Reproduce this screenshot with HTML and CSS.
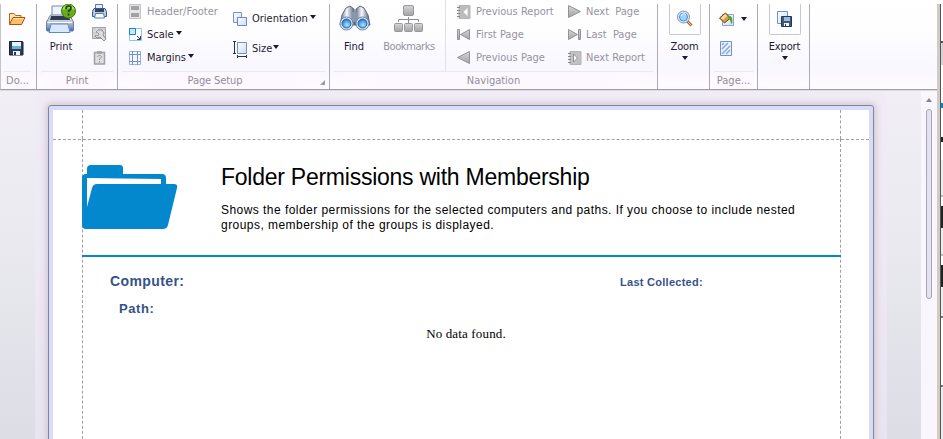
FILE: index.html
```html
<!DOCTYPE html>
<html lang="en">
<head>
<meta charset="utf-8">
<title>Folder Permissions with Membership</title>
<link rel="stylesheet" href="styles.css">
</head>
<body>
<svg class="defs" width="0" height="0" aria-hidden="true">
  <defs>
    <linearGradient id="metal" x1="0" y1="0" x2="0" y2="1"><stop offset="0" stop-color="#f4f7fb"/><stop offset=".5" stop-color="#b4c0d3"/><stop offset="1" stop-color="#667a9e"/></linearGradient>
    <linearGradient id="tube" x1="0" y1="0" x2="1" y2="0"><stop offset="0" stop-color="#59657b"/><stop offset=".45" stop-color="#f7f9fc"/><stop offset="1" stop-color="#4b5870"/></linearGradient>
    <linearGradient id="gray" x1="0" y1="0" x2="0" y2="1"><stop offset="0" stop-color="#d6d6d8"/><stop offset="1" stop-color="#a3a3a6"/></linearGradient>
    <linearGradient id="paper" x1="0" y1="0" x2="1" y2="1"><stop offset="0" stop-color="#fff"/><stop offset="1" stop-color="#cbdcf5"/></linearGradient>
    <radialGradient id="lens" cx=".55" cy=".65" r=".6"><stop offset="0" stop-color="#a9ecff"/><stop offset="1" stop-color="#2d79cc"/></radialGradient>
  </defs>
</svg>
<div class="app">
  <main class="viewer">
    <header class="ribbon">
      <section class="group doc">
        <div class="tools stack">
          <svg width="18" height="14" viewBox="0 0 18 14"><path d="M1.500 12.500V1.500H6l1.500 2H13v3" fill="#ffe2ae" stroke="#b4661f"/><path d="M1.500 12.500 5 5.500h12l-3.500 7z" fill="#ffc064" stroke="#a95512"/><path d="M5.500 6.500h10" stroke="#ffe9bc"/></svg>
          <svg class="save" width="15" height="15" viewBox="0 0 15 15"><path d="M.5.500h13l.5.500v13H.5z" fill="#2d3d58" stroke="#172237"/><path d="M3 1h9v6H3z" fill="#e9f3ff"/><path d="M3 5h9v3H3z" fill="#6bb1de"/><path d="M4 10h7v4H4z" fill="#edf3fb"/><path d="M5 11h2v3H5z" fill="#273750"/></svg>
        </div>
        <footer class="caption">Do...</footer>
      </section>
      <section class="group print">
        <div class="tools">
          <div class="big">
            <svg width="32" height="30" viewBox="0 0 32 30"><path d="M6 14V2h15v12" fill="#edf3fc" stroke="#7688a6"/><path d="M4.500 11h19l4 7v8.500H.5V18z" fill="url(#metal)" stroke="#6f82a6"/><path d="M5 12h18l1 4H4z" fill="#303b4d"/><path d="M1.500 18.500H26" stroke="#fff"/><path d="M5 20h17l2 8.500H3z" fill="#d9e8fe" stroke="#6688c7"/><path d="M1 26h3m20 0h3" stroke="#4b78c9" stroke-width="3"/><circle cx="22.500" cy="7" r="7" fill="#6aad1c" stroke="#3c7b10"/><path d="M16.500 6c1-7 11-7 12 0-4-2-8-2-12 0" fill="#a8dc61"/><path d="M20 5c0-4 5-4 5-1 0 2-2.500 2-2.500 4m0 1.500v2" fill="none" stroke="#164710" stroke-width="1.800"/></svg>
            <span>Print</span>
          </div>
          <div class="stack">
            <svg width="15" height="15" viewBox="0 0 15 15"><path d="M3.500 6V.500h7V6" fill="#e3efff" stroke="#5979ad"/><path d="M2 4.500h11l1.500 3v5H.5v-5z" fill="#b7c9e5" stroke="#395b94"/><path d="M3 5h9v3H3z" fill="#34435c"/><path d="M3.500 9.500h8l1 4.500H2.500z" fill="#fff" stroke="#547abf"/></svg>
            <svg width="15" height="15" viewBox="0 0 15 15"><path d="M.5.500h13v11H.5z" fill="#cecece" stroke="#a2a2a4"/><path d="M1 4h12M1 8h12M5 1v10" stroke="#e8e8e8"/><path d="m4 5 2-2h4l2 3-1 2 3 4-2 2-4-4-3 1-2-2 1-1 2 1 1-2-1-1z" fill="#ddd" stroke="#929295"/></svg>
            <svg width="13" height="15" viewBox="0 0 13 15"><path d="M1.500 2.500h10v11.500h-10z" fill="#dedee0" stroke="#a1a1a4" stroke-width="1.500"/><path d="M4 1h5v3H4z" fill="#a6a6a8"/><path d="M4.500 7c0-2 4-2 4 0L6.500 9v1m0 1v1.500" fill="none" stroke="#929296"/></svg>
          </div>
        </div>
        <footer class="caption">Print</footer>
      </section>
      <section class="group setup">
        <div class="tools">
          <div class="rows">
            <div class="item off"><svg width="14" height="16" viewBox="0 0 14 16"><path d="M.5.500h11v14H.5z" fill="#e6e6e8" stroke="#c3c3c6"/><path d="M2 2h8v4H2zm0 7h8v4H2z" fill="#a2a2a5"/></svg><span>Header/Footer</span></div>
            <div class="item"><svg width="14" height="14" viewBox="0 0 14 14"><path d="M.5.500h12v12H.5z" fill="#fff" stroke="#86c8f0"/><path d="M.5.500h6v6h-6z" fill="#c9e6fb" stroke="#1684d1"/><path d="m8 8 3 3m.5-3v3.500H8" fill="none" stroke="#293a5a"/></svg><span>Scale</span><i class="arrow"></i></div>
            <div class="item"><svg width="14" height="16" viewBox="0 0 14 16"><path d="M.5 1.500h11v13H.5z" fill="#f6f8ff" stroke="#9eb1de"/><path d="M3.500 1v14m5-14v14M0 4.500h12M0 11.500h12" stroke="#7390d2"/></svg><span>Margins</span><i class="arrow"></i></div>
          </div>
          <div class="rows second">
            <div class="item"><svg width="15" height="15" viewBox="0 0 15 15"><path d="M.5.500h8v10h-8z" fill="url(#paper)" stroke="#7893cc"/><path d="M4.500 5.500h9v8h-9z" fill="url(#paper)" stroke="#6888c8"/></svg><span>Orientation</span><i class="arrow"></i></div>
            <div class="item size"><svg width="16" height="17" viewBox="0 0 16 17"><path d="M4.500 1.500h9v11h-9z" fill="url(#paper)" stroke="#6e90d0"/><path d="M0 .500h3M0 12.500h3M1.500 1v11M4.500 14v3m9-3v3M5 15.500h9" stroke="#27364f"/></svg><span>Size</span><i class="arrow"></i></div>
          </div>
        </div>
        <footer class="caption"><span>Page Setup</span><svg class="launcher" width="6" height="6" viewBox="0 0 6 6"><path d="M5 0v5H0z" fill="#99999f"/></svg></footer>
      </section>
      <section class="group nav">
        <div class="tools">
          <div class="big find">
            <svg width="32" height="30" viewBox="0 0 32 30"><path d="m7 6 4-2 4 3 1 16H1l2-10z" fill="url(#tube)" stroke="#5c677b"/><path d="m25 6-4-2-4 3-1 16h15l-2-10z" fill="url(#tube)" stroke="#5c677b"/><path d="M13 10h6v10h-6z" fill="#8795ad"/><circle cx="7.500" cy="21.500" r="6.500" fill="#dbe9f7" stroke="#7187a9"/><circle cx="7.500" cy="21.500" r="4.500" fill="url(#lens)" stroke="#2567ad"/><circle cx="23.500" cy="21.500" r="6.500" fill="#dbe9f7" stroke="#7187a9"/><circle cx="23.500" cy="21.500" r="4.500" fill="url(#lens)" stroke="#2567ad"/></svg>
            <span>Find</span>
          </div>
          <div class="big off marks">
            <svg width="30" height="30" viewBox="0 0 30 30"><g fill="url(#gray)" stroke="#98989b"><rect x="9.500" y="1.500" width="10" height="10" rx="1.500"/><rect x=".5" y="19.500" width="8" height="8" rx="1"/><rect x="10.500" y="19.500" width="8" height="8" rx="1"/><rect x="20.500" y="19.500" width="8" height="8" rx="1"/></g><path d="M14.500 13v6M4.500 18v-2.500h20V18" fill="none" stroke="#8d8d91"/></svg>
            <span>Bookmarks</span>
          </div>
          <div class="rows pages">
            <div class="item off"><svg width="14" height="14" viewBox="0 0 14 14"><path d="M2 .5h11v13H2z" fill="#bcbcbe" stroke="#b4b4b7"/><path d="M0 2.500h3M0 5.500h3M0 8.500h3M0 11.500h3" stroke="#858589"/><path d="M10.500 3v8l-4-4z" fill="#fff"/></svg><span>Previous Report</span></div>
            <div class="item off"><svg width="14" height="14" viewBox="0 0 14 14"><path d="M.5 1.500h2v10h-2zM12.500 1.500v10L3.500 6.500z" fill="url(#gray)" stroke="#949498"/></svg><span>First Page</span></div>
            <div class="item off"><svg width="14" height="14" viewBox="0 0 14 14"><path d="M12.500.500v12L.5 6.500z" fill="url(#gray)" stroke="#949498"/></svg><span>Previous Page</span></div>
          </div>
          <div class="rows pages-next">
            <div class="item off"><svg width="14" height="14" viewBox="0 0 14 14"><path d="M.5.500v12l12-6z" fill="url(#gray)" stroke="#949498"/></svg><span>Next&nbsp; Page</span></div>
            <div class="item off"><svg width="14" height="14" viewBox="0 0 14 14"><path d="M10.500 1.500h2v10h-2zM.5 1.500v10L9.500 6.500z" fill="url(#gray)" stroke="#949498"/></svg><span>Last&nbsp; Page</span></div>
            <div class="item off"><svg width="14" height="14" viewBox="0 0 14 14"><path d="M2 .5h11v13H2z" fill="#c2c2c4" stroke="#b4b4b7"/><path d="M0 2.500h3M0 5.500h3M0 8.500h3M0 11.500h3" stroke="#858589"/><path d="M5.500 3v8l4-4z" fill="#fff" stroke="#919194"/></svg><span>Next Report</span></div>
          </div>
        </div>
        <footer class="caption">Navigation</footer>
      </section>
      <section class="group single">
        <div class="button"><svg width="18" height="18" viewBox="0 0 18 18"><path d="m11 11 4.500 4.500" stroke="#b76c36" stroke-width="3"/><path d="m12 12 3 3" stroke="#f5bb7e"/><circle cx="7.500" cy="7" r="6" fill="#dfefff" stroke="#8193b5"/><circle cx="7.500" cy="7" r="4" fill="#9cd3ff" stroke="#498cd2"/><path d="M5 6c1-3 4-3 5-1" stroke="#fff" fill="none"/></svg></div>
        <span>Zoom</span><i class="arrow"></i>
      </section>
      <section class="group background">
        <div class="tools rows">
          <div class="item"><svg width="16" height="14" viewBox="0 0 16 14"><path d="M3.500 2.500h11v11h-11z" fill="url(#paper)" stroke="#8ba4d2"/><path d="m.5 6 6-5 5 5-6 5z" fill="#d99a45" stroke="#6e401a"/><path d="m2 6 4-4 2 2-4 4z" fill="#ffe0a0"/><path d="M9 4c4-1 5 3 4 8-2-1-1-5-4-6" fill="#56a31d"/></svg><i class="arrow"></i></div>
          <div class="item"><svg width="14" height="16" viewBox="0 0 14 16"><path d="M1.500.500h11v14h-11z" fill="#eaf2ff" stroke="#6f91cd"/><path d="m3 8 6-6M3 13l8-8M7 13l4-4M3 4l2-2" stroke="#88a6dc" stroke-width="1.500"/></svg></div>
        </div>
        <footer class="caption">Page...</footer>
      </section>
      <section class="group single export">
        <div class="button"><svg width="17" height="17" viewBox="0 0 17 17"><path d="M1.500.500h10v12h-10z" fill="url(#paper)" stroke="#6e91cb"/><path d="M5.500 5.500h10v10h-10z" fill="#435776" stroke="#243753"/><path d="M8 6h6v4H8z" fill="#91bee6"/><path d="M8 12h5v3H8z" fill="#f4f8ff"/><path d="M9 13h1v2H9z" fill="#243753"/></svg></div>
        <span>Export</span><i class="arrow"></i>
      </section>
    </header>
    <div class="workspace">
      <div class="canvas">
        <article class="page">
          <div class="top-margin"></div>
          <div class="content">
            <div class="heading">
              <svg width="97" height="66" viewBox="0 0 97 66"><path d="M0 13q0-4 4-4h1V4q0-4 4-4h29q3 0 3 3v6h39q4 0 4 4v6h8q4 0 3 4l-9 37q-1 4-5 4H4q-4 0-4-4zM5 13v29l5-19q1-4 5-4h64v-5z" fill="#0388ce" fill-rule="evenodd"/></svg>
              <div class="intro"><h1>Folder Permissions with Membership</h1><p>Shows the folder permissions for the selected computers and paths. If you choose to include nested<br><span>groups, membership of the groups is displayed.</span></p></div>
            </div>
            <div class="meta"><b class="computer">Computer:</b><b class="collected">Last Collected:</b></div>
            <b class="path">Path:</b>
            <p class="empty">No data found.</p>
          </div>
        </article>
      </div>
      <div class="scrollbar"><i></i><div class="thumb"></div></div>
    </div>
  </main>
  <aside class="edge"></aside>
</div>
</body>
</html>
```
FILE: styles.css
```css
* { box-sizing: border-box; }
body { margin: 0; background: #fff; font: 11px/14px "DejaVu Sans Condensed", "DejaVu Sans", sans-serif; font-stretch: condensed; color: #1e1a31; overflow: hidden; }
svg { display: block; flex: none; }
span, b { white-space: nowrap; }
.defs { position: absolute; }
.app { display: flex; width: 943px; height: 439px; padding-top: 4px; }
.viewer { width: 937px; display: flex; flex-direction: column; }
.ribbon { display: flex; height: 86px; flex: none; border-bottom: 1px solid #9f9fa8; background: linear-gradient(#fff, #fdfcff 40%, #f9f7ff 75%, #fefcff); border-left: 1px solid #c6c4c8; }
.group { display: flex; flex-direction: column; height: 85px; border-right: 1px solid #acaab7; flex: none; }
.tools { display: flex; height: 67px; }
.caption { height: 18px; line-height: 18px; text-align: center; color: #918e9b; border-top: 1px solid #ebe8f2; margin: 0 4px; background: linear-gradient(90deg, transparent, #fdf8fe 15% 85%, transparent); }
.stack { display: flex; flex-direction: column; }
.doc { width: 36px; }
.doc .stack { padding: 8px 0 0 7px; gap: 15px; }
.doc .caption { margin: 0 5px 0 3px; }
.save { margin-left: 1px; }
.print { width: 81px; }
.print .stack { margin-left: 14px; gap: 8px; align-items: center; }
.big { display: flex; flex-direction: column; align-items: center; }
.big span { margin-top: 6px; }
.print .big { width: 32px; margin-left: 9px; }
.print .big span { margin-left: -2px; }
.rows { display: flex; flex-direction: column; }
.item { display: flex; align-items: center; height: 23px; gap: 4px; }
.off { color: #96939e; }
.setup { width: 212px; }
.setup .rows { padding: 0 0 0 11px; margin-top: -4px; width: 104px; }
.setup .second { padding: 4px 0 0 11px; width: 103px; }
.second .item { height: 30px; }
.size { gap: 3px; }
.size .arrow { margin-left: 1px; }
.arrow { width: 0; height: 0; border: 3.5px solid transparent; border-top: 4px solid #1d1933; border-bottom: 0; flex: none; }
.item .arrow { margin: -4px 0 0 -2px; }
.setup .caption { display: flex; justify-content: center; padding-right: 17px; position: relative; }
.setup .caption span { letter-spacing: -.1px; }
.launcher { position: absolute; right: -1px; bottom: 3px; }
.nav { width: 328px; }
.find { width: 32px; margin-left: 9px; }
.find svg { margin-top: -2px; }
.find span { margin: 8px 2px 0 0; }
.marks { width: 54px; margin-left: 11px; }
.marks span { letter-spacing: -.4px; }
.pages { width: 123px; margin-left: 9px; padding-left: 11px; border-left: 1px solid #e2dfec; }
.pages .item { gap: 5px; }
.pages, .pages-next { margin-top: -4px; }
.single { width: 52px; align-items: center; }
.button { width: 32px; height: 31px; border: 1px solid #c9c7d3; border-top: 0; border-radius: 0 0 2px 2px; display: flex; justify-content: center; align-items: center; margin-left: 2px; }
.single span { margin: 5px 0 0 2px; letter-spacing: -.15px; }
.single .arrow { margin-top: 2px; margin-left: 2px; }
.background { width: 48px; }
.background .rows { padding: 0 0 0 9px; }
.background .item { height: 30px; gap: 8px; }
.background .arrow { margin-top: -1px; }
.workspace { display: flex; height: 349px; }
.canvas { width: 921px; padding: 14px 0 0 48px; overflow: hidden; background: linear-gradient(#f1eff5, #e9e9ef 45%, #dcdde5); border-top: 1px solid #dddbe2; }
.page { width: 826px; height: 350px; border: 1px solid #85858e; border-radius: 3px; background: #fff; box-shadow: inset 0 0 0 4px #d6dcfa, 0 0 6px 2px #cfc8d6, 0 0 0 13px #f1e8f5a0; padding: 4px; }
.top-margin { height: 29px; margin: 0 28px 0 29px; border: 0 dashed #a0a0a0; border-width: 0 1px; }
.content { position: relative; margin-left: 29px; width: 759px; height: 320px; border: 0 dashed #a0a0a0; border-width: 0 1px; }
.content::before { content: ""; position: absolute; left: -30px; width: 816px; border-top: 1px dashed #a0a0a0; }
.heading { height: 118px; display: flex; padding: 26px 0 0; border-bottom: 2px solid #0388ce; margin: 0 -1px; }
.intro { margin-left: 42px; color: #000; font-family: "Liberation Sans", Arial, sans-serif; }
h1 { margin: -2px 0 0; font-size: 23px; line-height: 28px; font-weight: 400; white-space: nowrap; letter-spacing: -.25px; }
p { margin: 0; }
.intro p { font-size: 12px; line-height: 15px; margin-top: 12px; letter-spacing: .455px; white-space: nowrap; }
.meta { display: flex; padding: 14px 0 0 27px; height: 43px; justify-content: space-between; color: #36528b; font-family: "Liberation Sans", Arial, sans-serif; }
.computer { font-size: 14px; line-height: 20px; letter-spacing: .4px; }
.collected { width: 220px; font-size: 11px; line-height: 22px; letter-spacing: .27px; }
.path { display: block; margin-left: 36px; color: #36528b; font: bold 13px/18px "Liberation Sans", Arial, sans-serif; letter-spacing: .6px; }
.empty { text-align: center; margin-top: 7px; padding-left: 9px; color: #000; font: 13px/17px "Liberation Serif", serif; letter-spacing: .15px; }
.scrollbar { width: 16px; background: #faf6fd; border-top: 1px solid #dddbe2; display: flex; flex-direction: column; align-items: center; padding-top: 7px; }
.scrollbar i { border: 3px solid transparent; border-bottom: 4px solid #85828f; border-top: 0; }
.thumb { width: 6px; height: 190px; margin-top: 7px; border: 1px solid #a7a6b5; border-radius: 3px; background: #e3e2ee; }
.edge { width: 6px; border-left: 3px solid #d0cbc5; background: linear-gradient(90deg, #55545a 1px, transparent 1px), linear-gradient(#fff 37px, #555 37px 39px, #d6d4d2 39px 61px, #fff 61px 99px, #0388ce 99px 104px, #fff 104px 133px, #222 133px 138px, #fff 138px 156px, #eee 156px 191px, #bbb 191px 193px, #fff 193px 202px, #222 202px 224px, #eee 224px 250px, #bbb 250px 252px, #fff 252px 261px, #222 261px 283px, #eee 283px 312px, #777 312px 314px, #fff 314px 381px, #777 381px 383px, #eee 383px); }
```
